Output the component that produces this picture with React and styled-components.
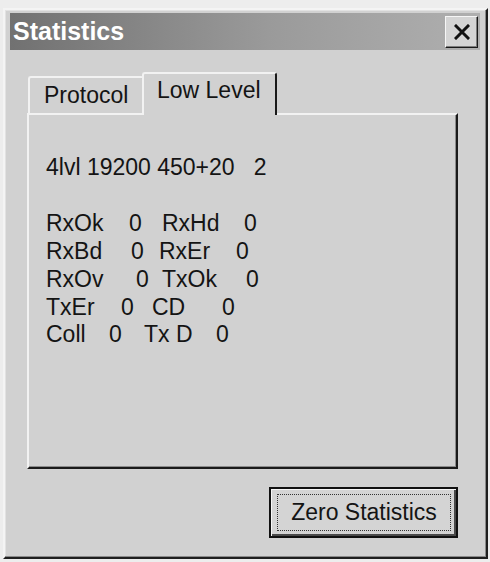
import React from 'react'
import styled, { createGlobalStyle } from 'styled-components';

const counters = [
    [['RxOk', 83], ['0', 33], ['RxHd', 82], ['0']],
    [['RxBd', 85], ['0', 28], ['RxEr', 77], ['0']],
    [['RxOv', 90], ['0', 26], ['TxOk', 84], ['0']],
    [['TxEr', 75], ['0', 31], ['CD', 70], ['0']],
    [['Coll', 63], ['0', 35], ['Tx D', 72], ['0']],
];

function CloseIcon() {
    return (
        <svg width="16" height="16" viewBox="0 0 16 16">
            <path d="M2 2 L14 14 M14 2 L2 14" stroke="#111" strokeWidth="3" strokeLinecap="square" />
        </svg>
    )
}

function App() {
    return (
        <>
            <GlobalStyle />
            <Window>
                <TitleBar>
                    <Title>Statistics</Title>
                    <CloseButton><CloseIcon /></CloseButton>
                </TitleBar>

                <Body>
                    <TabRow>
                        <Tab>Protocol</Tab>
                        <Tab $active>Low Level</Tab>
                    </TabRow>
                    <Panel>
                        <Line>4lvl 19200 450+20   2</Line>
                        <Line>&nbsp;</Line>
                        {counters.map((row, i) => (
                            <Line key={i}>
                                {row.map(([text, w], j) => (
                                    <Cell key={j} $w={w}>{text}</Cell>
                                ))}
                            </Line>
                        ))}
                    </Panel>
                    <Footer>
                        <DefaultButton>
                            <FocusRing>Zero Statistics</FocusRing>
                        </DefaultButton>
                    </Footer>
                </Body>
            </Window>
        </>
    )
}

export default App

const GlobalStyle = createGlobalStyle`
    body {
        margin: 0;
        background: #ededed;
        font-family: "Liberation Sans", Arial, sans-serif;
    }
`

const Window = styled.div`
    box-sizing: border-box;
    width: 485px;
    height: 551px;
    margin: 8px 0 0 3px;
    padding: 3px 6px 0 5px;
    background: #d1d1d1;
    border: 2px solid;
    border-color: #f4f4f4 #1e1e1e #1e1e1e #f4f4f4;
    box-shadow: inset -1px -1px 0 #8a8a8a, inset 1px 1px 0 #e2e2e2;
`

const TitleBar = styled.div`
    height: 37px;
    display: flex;
    align-items: center;
    justify-content: space-between;
    padding: 0 2px 0 3px;
    background: linear-gradient(to right, #717171, #9a9a9a 55%, #afafaf);
`

const Title = styled.span`
    color: #fff;
    font-weight: bold;
    font-size: 25px;
`

const CloseButton = styled.div`
    box-sizing: border-box;
    width: 33px;
    height: 32px;
    margin-top: 1px;
    display: flex;
    align-items: center;
    justify-content: center;
    background: #d4d4d4;
    border: 1px solid;
    border-color: #f6f6f6 #1a1a1a #1a1a1a #f6f6f6;
    box-shadow: inset -1px -1px 0 #7c7c7c;
`

const Body = styled.div`
    padding: 22px 0 0 17px;
    display: flex;
    flex-direction: column;
`

const TabRow = styled.div`
    display: flex;
    align-items: flex-end;
    padding-left: 1px;
    margin-bottom: -2px;
    position: relative;
    z-index: 1;
`

const Tab = styled.div`
    box-sizing: border-box;
    height: ${p => p.$active ? '43px' : '37px'};
    width: ${p => p.$active ? '135px' : '116px'};
    margin-right: ${p => p.$active ? '0' : '-2px'};
    margin-bottom: ${p => p.$active ? '0' : '2px'};
    padding: ${p => p.$active ? '0 0 8px 13px' : '0 0 0 14px'};
    display: flex;
    align-items: center;
    font-size: 23px;
    color: #141414;
    background: #d1d1d1;
    border-top: 2px solid #f2f2f2;
    border-left: 2px solid #f2f2f2;
    border-right: 2px solid ${p => p.$active ? '#1a1a1a' : '#8a8a8a'};
    border-radius: 3px 3px 0 0;
`

const Panel = styled.div`
    box-sizing: border-box;
    width: 431px;
    height: 356px;
    padding: 39px 0 0 17px;
    font-size: 23px;
    line-height: 27.9px;
    color: #141414;
    border: 2px solid;
    border-color: #f2f2f2 #1a1a1a #1a1a1a #f2f2f2;
    box-shadow: inset -1px -1px 0 #8c8c8c;
`

const Line = styled.div`
    white-space: pre;
`

const Cell = styled.span`
    display: inline-block;
    width: ${p => p.$w ? p.$w + 'px' : 'auto'};
`

const Footer = styled.div`
    display: flex;
    justify-content: flex-end;
    width: 431px;
    margin-top: 18px;
`

const DefaultButton = styled.div`
    box-sizing: border-box;
    width: 189px;
    height: 51px;
    padding: 5px 5px 5px 6px;
    background: #d4d4d4;
    border: 2px solid #111;
    box-shadow: inset 1px 1px 0 #f6f6f6, inset -2px -2px 0 #4a4a4a;
`

const FocusRing = styled.div`
    box-sizing: border-box;
    height: 100%;
    display: flex;
    align-items: center;
    justify-content: center;
    font-size: 23px;
    color: #141414;
    border: 1px dotted #333;
`
